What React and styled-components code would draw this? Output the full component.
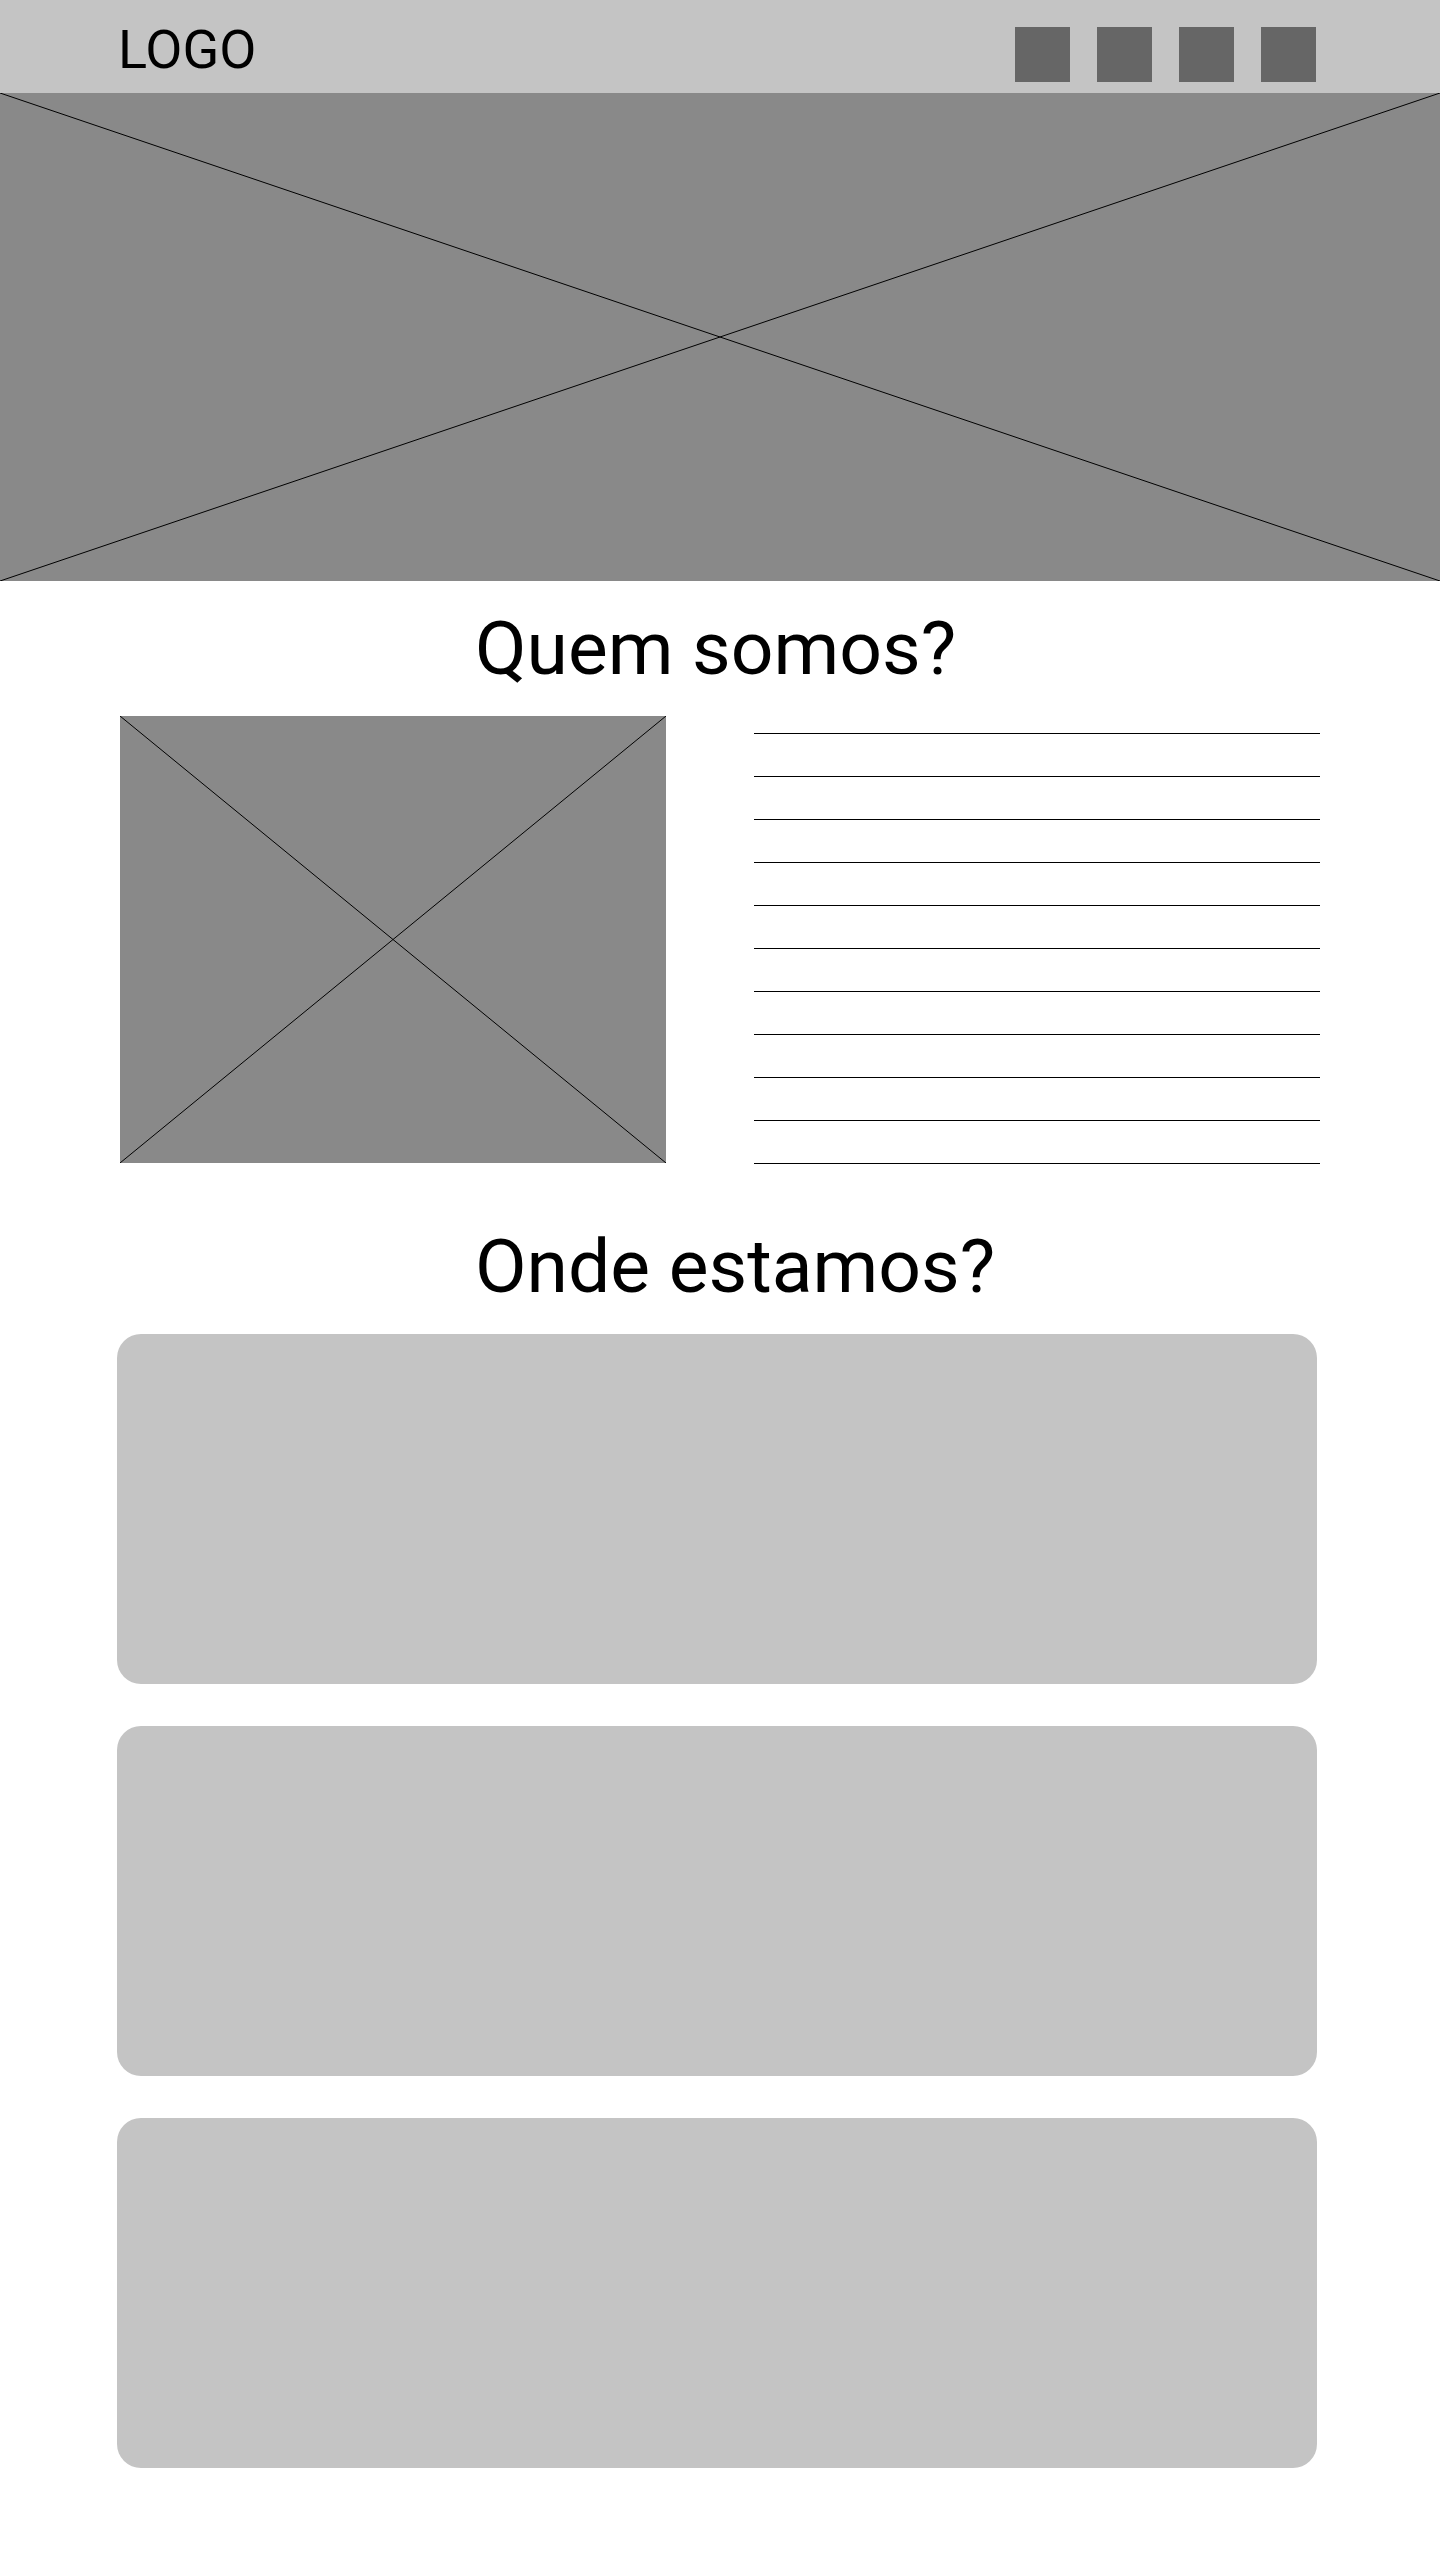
import React from "react";
import styled, { createGlobalStyle } from "styled-components";

const GlobalStyle = createGlobalStyle`
  body {
    margin: 0;
    background: #ffffff;
    font-family: Roboto, "Liberation Sans", Arial, sans-serif;
    color: #000000;
  }
`;

const Cross = () => (
  <CrossSvg viewBox="0 0 100 100" preserveAspectRatio="none">
    <line x1="0" y1="0" x2="100" y2="100" />
    <line x1="100" y1="0" x2="0" y2="100" />
  </CrossSvg>
);

const App = () => {
  const navItems = [1, 2, 3, 4];
  const textLines = Array.from({ length: 11 }, (_, i) => i);
  const places = [1, 2, 3];

  return (
    <>
      <GlobalStyle />
      <Page>
        <Header>
          <Logo>LOGO</Logo>
          <NavIcons>
            {navItems.map((n) => (
              <NavSquare key={n} />
            ))}
          </NavIcons>
        </Header>

        <Hero>
          <Cross />
        </Hero>

        <Main>
          <SectionTitle $top={30}>Quem somos?</SectionTitle>
          <AboutRow>
            <ImagePlaceholder>
              <Cross />
            </ImagePlaceholder>
            <TextLines>
              {textLines.map((i) => (
                <TextLine key={i} />
              ))}
            </TextLines>
          </AboutRow>

          <SectionTitle $top={65}>Onde estamos?</SectionTitle>
          <PlaceList>
            {places.map((p) => (
              <PlaceCard key={p} />
            ))}
          </PlaceList>
        </Main>
      </Page>
    </>
  );
};

export default App;

const Page = styled.div`
  width: 1440px;
  min-height: 2564px;
  padding-bottom: 97px;
  box-sizing: border-box;
`;

const Header = styled.header`
  display: flex;
  justify-content: space-between;
  align-items: flex-start;
  height: 93px;
  padding: 0 124px 0 118px;
  background-color: #c4c4c4;
  box-sizing: border-box;
`;

const Logo = styled.div`
  margin-top: 23px;
  font-size: 54px;
  line-height: 1;
  font-weight: 400;
`;

const NavIcons = styled.nav`
  display: flex;
  gap: 27px;
  margin-top: 27px;
`;

const NavSquare = styled.div`
  width: 55px;
  height: 55px;
  background-color: #666666;
`;

const Hero = styled.section`
  height: 488px;
  background-color: #898989;
`;

const CrossSvg = styled.svg`
  display: block;
  width: 100%;
  height: 100%;

  line {
    stroke: #000000;
    stroke-width: 1;
    vector-effect: non-scaling-stroke;
  }
`;

const Main = styled.main`
  width: 1200px;
  margin: 0 auto;
`;

const SectionTitle = styled.h2`
  margin: ${({ $top }) => $top}px 0 30px;
  padding-left: 355px;
  font-size: 75px;
  line-height: 1;
  font-weight: 400;
`;

const AboutRow = styled.div`
  display: flex;
  justify-content: space-between;
  align-items: flex-start;
`;

const ImagePlaceholder = styled.div`
  width: 546px;
  height: 447px;
  background-color: #898989;
`;

const TextLines = styled.div`
  display: flex;
  flex-direction: column;
  gap: 42px;
  width: 566px;
  padding-top: 17px;
`;

const TextLine = styled.div`
  height: 1px;
  background-color: #000000;
`;

const PlaceList = styled.div`
  display: flex;
  flex-direction: column;
  gap: 42px;
  width: 1200px;
  margin-left: -3px;
`;

const PlaceCard = styled.div`
  height: 350px;
  border-radius: 24px;
  background-color: #c4c4c4;
`;
